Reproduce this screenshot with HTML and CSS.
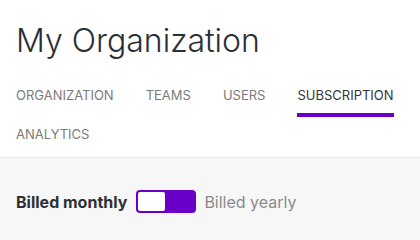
FILE: index.html
```html
<!DOCTYPE html>
<html lang="en">
<head>
<meta charset="utf-8">
<title>My Organization</title>
<link rel="stylesheet" href="styles.css">
</head>
<body>
<header class="page-header">
  <h1 class="page-title">My Organization</h1>
  <nav class="tabs">
    <a class="tab">Organization</a>
    <a class="tab">Teams</a>
    <a class="tab">Users</a>
    <a class="tab tab-active">Subscription</a>
    <a class="tab">Analytics</a>
  </nav>
</header>
<main class="content">
  <div class="billing-toggle">
    <span class="billing-label billing-label-active">Billed monthly</span>
    <span class="switch" role="switch" aria-checked="false"><span class="switch-knob"></span></span>
    <span class="billing-label">Billed yearly</span>
  </div>
</main>
</body>
</html>
```
FILE: styles.css
```css
html, body {
  margin: 0;
  padding: 0;
}
body {
  font-family: Inter, "Noto Sans", sans-serif;
  background: #f7f7f7;
  color: #2c2f36;
  width: 420px;
  height: 240px;
  overflow: hidden;
}
.page-header {
  background: #ffffff;
  padding: 21px 16px 1px;
  border-bottom: 1px solid #e4e4e4;
}
.page-title {
  margin: 0;
  font-size: 32px;
  line-height: 40px;
  font-weight: 300;
  color: #2b2e35;
}
.tabs {
  display: flex;
  flex-wrap: wrap;
  column-gap: 32px;
  row-gap: 9px;
  margin-top: 26px;
}
.tab {
  display: block;
  font-size: 13px;
  line-height: 16px;
  text-transform: uppercase;
  color: #7b7b7b;
  padding-bottom: 10px;
  border-bottom: 4px solid transparent;
  text-decoration: none;
}
.tab-active {
  color: #34363b;
  border-bottom-color: #6a00c8;
}
.content {
  padding: 32px 16px;
}
.billing-toggle {
  display: flex;
  align-items: center;
  gap: 8px;
}
.billing-label {
  font-size: 16px;
  line-height: 20px;
  color: #8a8a8a;
}
.billing-label-active {
  font-weight: 700;
  color: #2e3036;
  margin-right: 1px;
}
.switch {
  display: flex;
  width: 60px;
  height: 23px;
  box-sizing: border-box;
  padding: 2px;
  background: #6a00c8;
  border-radius: 4px;
}
.switch-knob {
  width: 27px;
  height: 19px;
  background: #ffffff;
  border-radius: 2px;
}
```
